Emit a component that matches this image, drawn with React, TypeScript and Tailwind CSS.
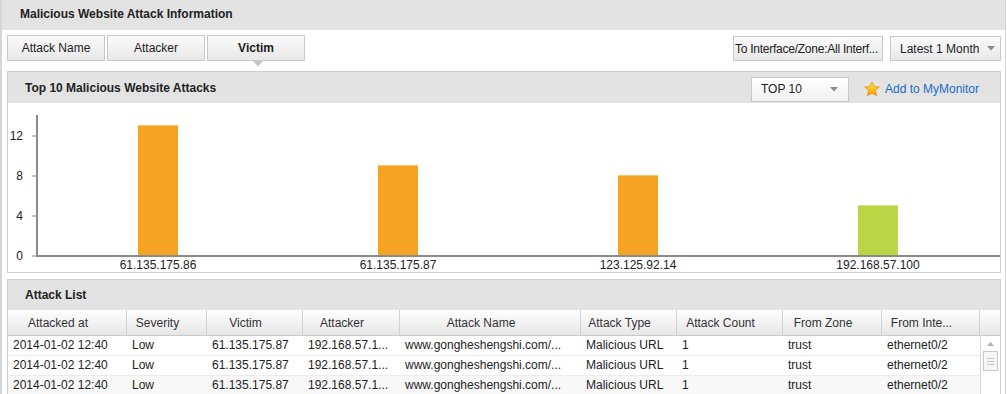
import React from "react";

const bars = [
  { label: "61.135.175.86", value: 13, color: "#f6a324" },
  { label: "61.135.175.87", value: 9, color: "#f6a324" },
  { label: "123.125.92.14", value: 8, color: "#f6a324" },
  { label: "192.168.57.100", value: 5, color: "#bad647" },
];

const headers = [
  "Attacked at",
  "Severity",
  "Victim",
  "Attacker",
  "Attack Name",
  "Attack Type",
  "Attack Count",
  "From Zone",
  "From Inte...",
];

const rows = [0, 1, 2].map(() => [
  "2014-01-02 12:40",
  "Low",
  "61.135.175.87",
  "192.168.57.1...",
  "www.gongheshengshi.com/...",
  "Malicious URL",
  "1",
  "trust",
  "ethernet0/2",
]);

const cols = "grid grid-cols-[119px_80px_96px_97px_181px_96px_106px_99px_98px_20px]";

function Caret() {
  return (
    <svg width="8" height="5" viewBox="0 0 8 5" className="shrink-0">
      <path d="M0 0 L8 0 L4 4.5 Z" fill="#8c8c8c" />
    </svg>
  );
}

function Star() {
  return (
    <svg width="16" height="16" viewBox="0 0 16 16" className="shrink-0">
      <defs>
        <linearGradient id="starg" x1="0" y1="0" x2="0" y2="1">
          <stop offset="0" stopColor="#ffe680" />
          <stop offset="0.5" stopColor="#ffc61a" />
          <stop offset="1" stopColor="#f39a0c" />
        </linearGradient>
      </defs>
      <path
        d="M8 0.8 L10.1 5.6 L15.2 6 L11.3 9.4 L12.5 14.6 L8 11.9 L3.5 14.6 L4.7 9.4 L0.8 6 L5.9 5.6 Z"
        fill="url(#starg)"
        stroke="#e58a06"
        strokeWidth="0.8"
        strokeLinejoin="round"
      />
    </svg>
  );
}

function Tab({ label, active }: { label: string; active?: boolean }) {
  return (
    <div
      className={
        "relative w-[98px] h-[26px] flex items-center justify-center border border-[#c9c9c9] bg-gradient-to-b from-[#fafafa] to-[#e8e8e8] " +
        (active ? "font-bold" : "")
      }
    >
      {label}
      {active && (
        <svg width="10" height="6" viewBox="0 0 10 6" className="absolute left-[45px] top-[25px]">
          <path d="M0 0 L10 0 L5 5.5 Z" fill="#c6c6c6" />
        </svg>
      )}
    </div>
  );
}

function Chart() {
  const ticks = [0, 4, 8, 12];
  return (
    <svg width="992" height="169" className="block" fontFamily="'Liberation Sans', Arial, sans-serif" fontSize="12">
      <rect x="28" y="12" width="2" height="142" fill="#8a8a8a" />
      <rect x="28" y="152" width="964" height="2" fill="#8a8a8a" />
      {ticks.map((t) => {
        const y = 153 - t * 10;
        return (
          <g key={t}>
            <rect x="24" y={y - 0.5} width="4" height="1" fill="#8a8a8a" />
            <text x="15" y={y + 4} textAnchor="end" fill="#222">
              {t}
            </text>
          </g>
        );
      })}
      {bars.map((b, i) => {
        const h = b.value * 10;
        const x = 130 + i * 240;
        return (
          <g key={b.label}>
            <rect x={x} y={152 - h} width="40" height={h} fill={b.color} />
            <rect x={x} y={152 - h} width="40" height="1" fill="#ffffff" opacity="0.35" />
            <text x={x + 20} y="166" textAnchor="middle" fill="#222">
              {b.label}
            </text>
          </g>
        );
      })}
    </svg>
  );
}

export default function App() {
  return (
    <div className="w-[1006px] h-[394px] overflow-hidden bg-white border-l-2 border-r border-[#d6d6d6] font-['Liberation_Sans',Arial,sans-serif] text-[12px] text-[#222]">
      {/* title bar */}
      <div className="h-[30px] bg-[#e3e3e3] flex items-center pl-[18px] pb-[2px] font-bold">
        Malicious Website Attack Information
      </div>

      {/* tabs + filters */}
      <div className="h-[41px] flex items-start pt-[5px] pl-[5px] pr-[4px]">
        <div className="flex gap-[2px]">
          <Tab label="Attack Name" />
          <Tab label="Attacker" />
          <Tab label="Victim" active />
        </div>
        <div className="flex-1" />
        <div className="flex gap-[7px] mt-[1px]">
          <div className="w-[150px] h-[25px] flex items-center pl-[1px] border border-[#c9c9c9] bg-gradient-to-b from-[#fafafa] to-[#e9e9e9] whitespace-nowrap overflow-hidden tracking-[-0.25px]">
            To Interface/Zone:All Interf...
          </div>
          <div className="w-[111px] h-[25px] flex items-center gap-[8px] pl-[9px] border border-[#c9c9c9] bg-gradient-to-b from-[#fafafa] to-[#e9e9e9] whitespace-nowrap">
            Latest 1 Month
            <Caret />
          </div>
        </div>
      </div>

      {/* chart panel */}
      <div className="w-[994px] h-[202px] ml-[5px] border border-[#cfcfcf] flex flex-col">
        <div className="h-[31px] bg-[#e3e3e3] flex items-center pl-[17px] pr-[21px]">
          <span className="font-bold">Top 10 Malicious Website Attacks</span>
          <div className="flex-1" />
          <div className="w-[98px] h-[25px] mt-[3px] flex items-center justify-between pl-[9px] pr-[10px] border border-[#c9c9c9] bg-gradient-to-b from-[#ffffff] to-[#f0f0f0]">
            TOP 10
            <Caret />
          </div>
          <div className="ml-[15px] mt-[3px] flex items-center gap-[5px] text-[#1a6cc4]">
            <Star />
            <span>Add to MyMonitor</span>
          </div>
        </div>
        <Chart />
      </div>

      {/* attack list */}
      <div className="w-[994px] ml-[5px] mt-[6px] border border-[#cfcfcf]">
        <div className="h-[30px] bg-[#e3e3e3] flex items-center pl-[17px] font-bold">Attack List</div>
        <div className={cols + " h-[26px] bg-gradient-to-b from-[#ffffff] to-[#e6e6e6] border-b border-[#c9c9c9]"}>
          {headers.map((h) => (
            <div
              key={h}
              className="flex items-center justify-center pr-[18px] border-r border-[#d2d2d2] text-[#333] whitespace-nowrap"
            >
              {h}
            </div>
          ))}
          <div />
        </div>
        <div className={cols}>
          <div className="col-span-9">
            {rows.map((r, i) => (
              <div
                key={i}
                className={
                  "grid grid-cols-[119px_80px_96px_97px_181px_96px_106px_99px_98px] h-[20px] border-b border-[#ececec] " +
                  (i === 2 ? "bg-[#f8f8f8]" : "bg-white")
                }
              >
                {r.map((c, j) => (
                  <div key={j} className="pl-[5px] leading-[19px] whitespace-nowrap overflow-hidden">
                    {c}
                  </div>
                ))}
              </div>
            ))}
          </div>
          <div className="border-l border-[#d6d6d6] bg-white flex flex-col items-center pt-[6px]">
            <svg width="7" height="4" viewBox="0 0 7 4">
              <path d="M0 4 L7 4 L3.5 0 Z" fill="#b0b0b0" />
            </svg>
            <div className="mt-[5px] w-[15px] h-[20px] border border-[#c8c8c8] bg-[#f6f6f6] flex flex-col items-center justify-center gap-[2px]">
              <div className="w-[7px] h-px bg-[#c4c4c4]" />
              <div className="w-[7px] h-px bg-[#c4c4c4]" />
              <div className="w-[7px] h-px bg-[#c4c4c4]" />
            </div>
          </div>
        </div>
      </div>
    </div>
  );
}
